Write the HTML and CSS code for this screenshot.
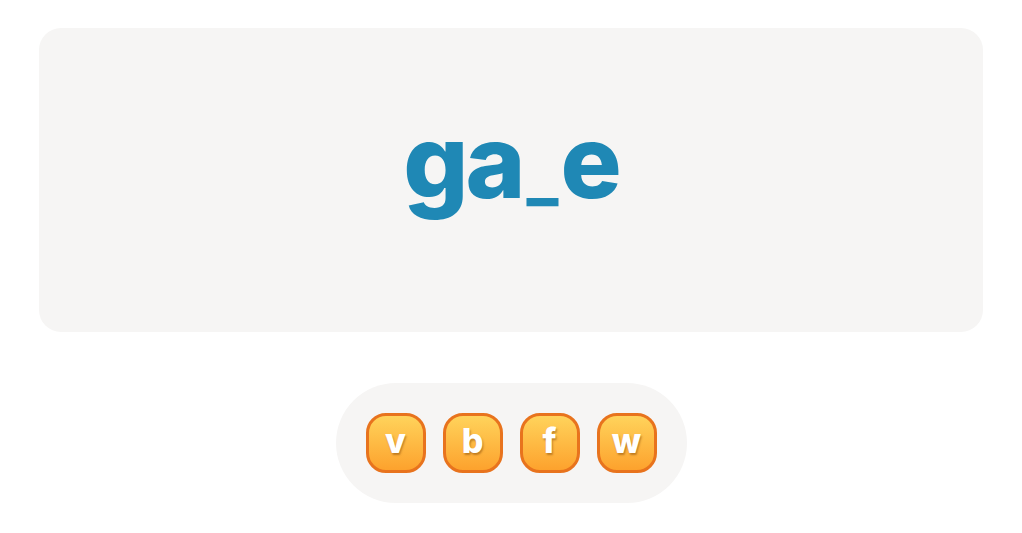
FILE: index.html
```html
<!DOCTYPE html>
<html>
<head>
<meta charset="utf-8">
<link rel="stylesheet" href="styles.css">
</head>
<body>
<div class="page">
  <div class="word-card">
    <div class="word">ga<span class="blank">_</span>e</div>
  </div>
  <div class="tray">
    <button class="tile">v</button>
    <button class="tile">b</button>
    <button class="tile">f</button>
    <button class="tile">w</button>
  </div>
</div>
</body>
</html>
```
FILE: styles.css
```css
html, body {
  margin: 0;
  padding: 0;
  background: #ffffff;
}
.page {
  width: 1022px;
  height: 533px;
  display: flex;
  flex-direction: column;
  align-items: center;
  padding-top: 28px;
  box-sizing: border-box;
}
.word-card {
  width: 944px;
  height: 304px;
  background: #f6f5f4;
  border-radius: 22px;
  display: flex;
  align-items: center;
  justify-content: center;
}
.word {
  font-family: Inter, "Noto Sans", sans-serif;
  font-weight: 800;
  font-size: 102px;
  letter-spacing: -3px;
  color: #1f88b5;
  line-height: 1;
  margin-top: -38px;
}
.blank {
  font-size: 66px;
  letter-spacing: 2px;
  margin-left: 4px;
}
.tray {
  margin-top: 51px;
  background: #f6f5f4;
  border-radius: 60px;
  padding: 30px;
  display: flex;
  gap: 17px;
}
.tile {
  width: 60px;
  height: 60px;
  box-sizing: border-box;
  border: 3px solid #e8731d;
  border-radius: 20px;
  background: linear-gradient(180deg, #ffd35b 0%, #fda22d 100%);
  color: #ffffff;
  font-family: Inter, "Noto Sans", sans-serif;
  font-weight: 800;
  font-size: 34px;
  line-height: 1;
  padding: 0 0 4px 0;
  text-shadow: 1px 2px 2px rgba(120, 60, 0, 0.45);
  display: flex;
  align-items: center;
  justify-content: center;
  cursor: pointer;
}
```
